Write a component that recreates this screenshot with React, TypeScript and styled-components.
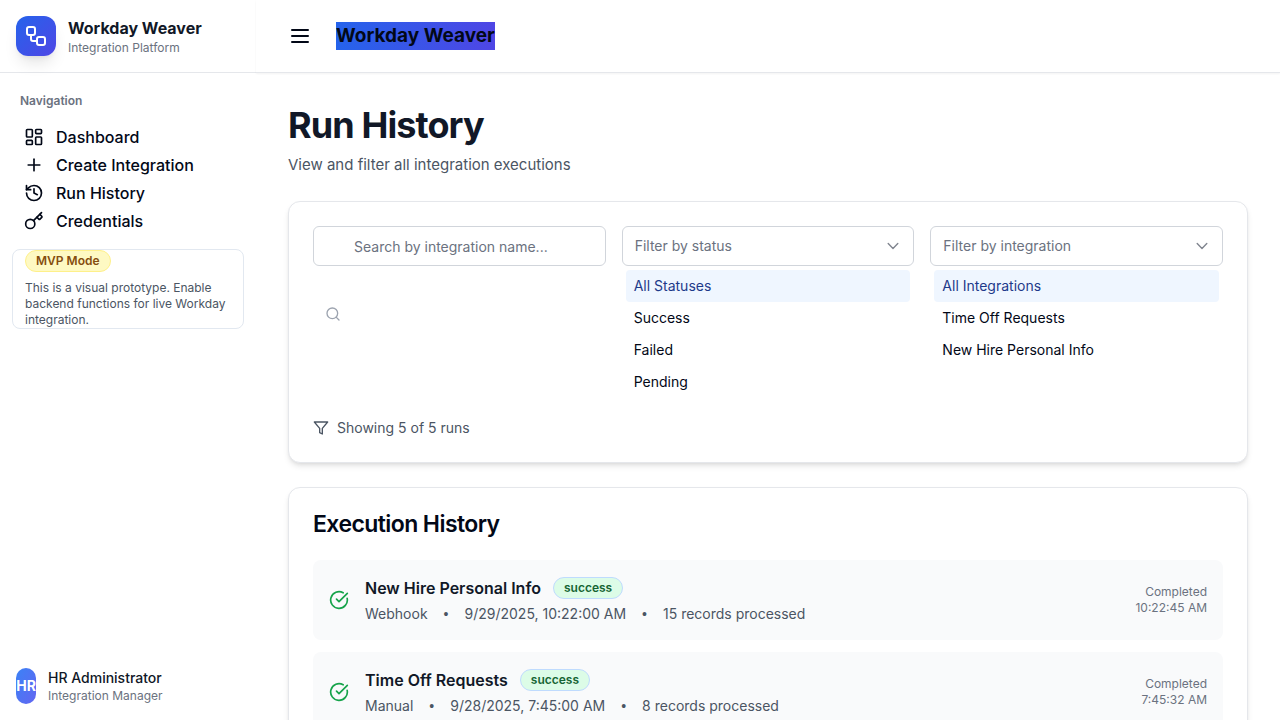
import React, { useState } from "react";
import styled, { createGlobalStyle } from "styled-components";
import {
  CircleCheckBig,
  History,
  Key,
  LayoutDashboard,
  Plus,
  Search,
  Workflow,
} from "lucide-react";

const GlobalStyle = createGlobalStyle`
  *, *::before, *::after { box-sizing: border-box; }
  body {
    margin: 0;
    background: #ffffff;
    color: #020817;
    font-family: Inter, "Liberation Sans", sans-serif;
    font-size: 16px;
    line-height: 24px;
  }
  h1, h2, h3, p, ul { margin: 0; padding: 0; }
  ul { list-style: none; }
  button, input, select { font: inherit; color: inherit; }
  svg { display: block; flex-shrink: 0; }
`;

const Shell = styled.div`
  display: flex;
  height: 100vh;
`;

const Sidebar = styled.aside`
  display: flex;
  flex-direction: column;
  flex: 0 0 256px;
  background: #ffffff;
`;

const Brand = styled.div`
  display: flex;
  align-items: center;
  gap: 12px;
  padding: 16px;
  border-bottom: 1px solid #e5e7eb;
`;

const BrandMark = styled.span`
  display: flex;
  align-items: center;
  justify-content: center;
  width: 40px;
  height: 40px;
  border-radius: 12px;
  color: #ffffff;
  background: linear-gradient(to bottom right, #2563eb, #4f46e5);
  box-shadow: 0 10px 15px -3px rgba(0, 0, 0, 0.1), 0 4px 6px -4px rgba(0, 0, 0, 0.1);
`;

const BrandName = styled.p`
  font-weight: 700;
  color: #111827;
`;

const Caption = styled.p`
  font-size: 12px;
  line-height: 16px;
  color: #6b7280;
`;

const SidebarBody = styled.div`
  flex: 1;
  padding: 12px;
`;

const NavLabel = styled.p`
  padding: 8px;
  margin-bottom: 8px;
  font-size: 12px;
  line-height: 16px;
  font-weight: 600;
  color: #6b7280;
`;

const NavList = styled.ul`
  display: flex;
  flex-direction: column;
  gap: 4px;
  padding: 0 12px;
`;

const NavLink = styled.a`
  display: flex;
  align-items: center;
  gap: 12px;
  font-weight: 500;
  color: #020817;
  text-decoration: none;
`;

const Notice = styled.section`
  margin-top: 16px;
  padding: 0 12px;
  border: 1px solid #e2e8f0;
  border-radius: 8px;
`;

const NoticeText = styled.p`
  margin-top: 8px;
  font-size: 12px;
  line-height: 16px;
  color: #4b5563;
`;

const tones = {
  warning: { text: "#854d0e", fill: "#fef9c3", edge: "#fef08a" },
  success: { text: "#166534", fill: "#dcfce7", edge: "#bfdbfe" },
};

const Badge = styled.span<{ $tone: keyof typeof tones }>`
  display: flex;
  width: fit-content;
  padding: 2px 10px;
  border: 1px solid ${(p) => tones[p.$tone].edge};
  border-radius: 11px;
  background: ${(p) => tones[p.$tone].fill};
  color: ${(p) => tones[p.$tone].text};
  font-size: 12px;
  line-height: 16px;
  font-weight: 600;
`;

const Account = styled.div`
  display: flex;
  align-items: center;
  gap: 12px;
  padding: 16px;
`;

const Avatar = styled.span`
  display: flex;
  align-items: center;
  justify-content: center;
  width: 20px;
  height: 36px;
  border-radius: 10px;
  background: linear-gradient(to bottom right, #3b82f6, #6366f1);
  color: #ffffff;
  font-size: 14px;
  line-height: 20px;
  font-weight: 700;
`;

const AccountName = styled.p`
  font-size: 14px;
  line-height: 20px;
  font-weight: 500;
  color: #111827;
`;

const Main = styled.main`
  display: flex;
  flex: 1;
  flex-direction: column;
  min-width: 0;
`;

const TopBar = styled.header`
  display: flex;
  align-items: center;
  gap: 24px;
  padding: 22px 32px;
  border-bottom: 1px solid #e5e7eb;
  box-shadow: 0 1px 2px rgba(0, 0, 0, 0.05);
`;

const MenuButton = styled.button`
  padding: 0;
  border: 0;
  background: none;
  cursor: pointer;
`;

const TopTitle = styled.p`
  font-size: 19px;
  line-height: 28px;
  font-weight: 700;
  background: linear-gradient(to right, #2563eb, #4f46e5);
`;

const Content = styled.div`
  display: flex;
  flex: 1;
  flex-direction: column;
  gap: 24px;
  min-height: 0;
  padding: 32px;
  overflow-y: auto;
  scrollbar-width: none;
`;

const PageTitle = styled.h1`
  margin-bottom: 8px;
  font-size: 36px;
  line-height: 40px;
  font-weight: 700;
  letter-spacing: -0.025em;
  color: #111827;
`;

const PageIntro = styled.p`
  font-size: 15px;
  color: #4b5563;
`;

const Card = styled.section`
  flex-shrink: 0;
  padding: 24px;
  border: 1px solid #e5e7eb;
  border-radius: 12px;
  background: #ffffff;
  box-shadow: 0 4px 6px -1px rgba(0, 0, 0, 0.1), 0 2px 4px -2px rgba(0, 0, 0, 0.1);
`;

const FilterGrid = styled.div`
  display: grid;
  grid-template-columns: repeat(3, minmax(0, 1fr));
  gap: 16px;
`;

const SearchField = styled.label`
  position: relative;
  color: #9ca3af;

  svg {
    position: absolute;
    left: 12px;
    top: 50%;
    transform: translateY(-50%);
  }
`;

const SearchInput = styled.input`
  display: block;
  width: 100%;
  height: 40px;
  padding: 8px 12px 8px 40px;
  border: 1px solid #d1d5db;
  border-radius: 6px;
  background: #ffffff;
  color: #020817;
  font-size: 14px;

  &::placeholder { color: #6b7280; opacity: 1; }
`;

const SelectBox = styled.div`
  position: relative;
  color: #80858f;

  svg {
    position: absolute;
    right: 13px;
    top: 12px;
    pointer-events: none;
  }
`;

const SelectInput = styled.select`
  display: block;
  width: 100%;
  height: 40px;
  padding: 0 12px;
  appearance: none;
  border: 1px solid #d1d5db;
  border-radius: 6px;
  background: #ffffff;
  color: #6b7280;
  font-size: 14px;
`;

const OptionList = styled.ul`
  padding: 4px;
`;

const OptionButton = styled.button<{ $active: boolean }>`
  display: block;
  width: 100%;
  padding: 6px 8px;
  border: 0;
  border-radius: 4px;
  background: ${(p) => (p.$active ? "#eff6ff" : "transparent")};
  color: ${(p) => (p.$active ? "#1e3a8a" : "#020817")};
  font-size: 14px;
  line-height: 20px;
  text-align: left;
  cursor: pointer;
`;

const Summary = styled.p`
  display: flex;
  align-items: center;
  gap: 8px;
  margin-top: 16px;
  font-size: 14px;
  line-height: 20px;
  color: #4b5563;
`;

const CardTitle = styled.h2`
  margin-bottom: 24px;
  font-size: 23px;
  line-height: 24px;
  font-weight: 600;
  letter-spacing: -0.025em;
`;

const RunList = styled.ul`
  display: flex;
  flex-direction: column;
  gap: 12px;
`;

const RunRow = styled.li`
  display: flex;
  align-items: center;
  gap: 16px;
  padding: 16px;
  border-radius: 8px;
  background: #f9fafb;
  color: #16a34a;
`;

const RunInfo = styled.div`
  flex: 1;
  min-width: 0;
`;

const RunHeading = styled.div`
  display: flex;
  align-items: center;
  gap: 12px;
  margin-bottom: 4px;
`;

const RunName = styled.h3`
  font-size: 16px;
  line-height: 24px;
  font-weight: 600;
  color: #111827;
`;

const RunMeta = styled.p`
  display: flex;
  gap: 16px;
  font-size: 14px;
  line-height: 20px;
  color: #4b5563;
`;

const Bullet = styled.span`
  font-family: "Liberation Sans", sans-serif;
`;

const RunFinish = styled.div`
  text-align: right;
`;

function MenuIcon() {
  return (
    <svg width="24" height="24" viewBox="0 0 24 24" fill="none" stroke="currentColor" strokeWidth="2" strokeLinecap="round" aria-hidden="true">
      <path d="M4 6h16M4 12h16M4 18h16" />
    </svg>
  );
}

function ChevronIcon() {
  return (
    <svg width="16" height="16" viewBox="0 0 16 16" fill="none" stroke="currentColor" strokeWidth="1.4" strokeLinecap="round" strokeLinejoin="round" aria-hidden="true">
      <path d="M3.2 5.6 8 10.4l4.8-4.8" />
    </svg>
  );
}

function FilterIcon() {
  return (
    <svg width="16" height="16" viewBox="0 0 24 24" fill="none" stroke="currentColor" strokeWidth="2" strokeLinecap="round" strokeLinejoin="round" aria-hidden="true">
      <polygon points="22 3 2 3 10 12.46 10 19 14 21 14 12.46 22 3" />
    </svg>
  );
}

interface FilterProps {
  label: string;
  options: string[];
  value: string;
  onChange: (value: string) => void;
}

function Filter({ label, options, value, onChange }: FilterProps) {
  return (
    <div>
      <SelectBox>
        <SelectInput
          aria-label={label}
          value={value}
          onChange={(e) => onChange(e.target.value)}
        >
          <option value="">{label}</option>
          {options.slice(1).map((o) => (
            <option key={o} value={o}>{o}</option>
          ))}
        </SelectInput>
        <ChevronIcon />
      </SelectBox>
      <OptionList>
        {options.map((o, i) => {
          const key = i === 0 ? "" : o;
          return (
            <li key={o}>
              <OptionButton
                type="button"
                $active={value === key}
                aria-pressed={value === key}
                onClick={() => onChange(key)}
              >
                {o}
              </OptionButton>
            </li>
          );
        })}
      </OptionList>
    </div>
  );
}

const navItems = [
  { label: "Dashboard", Icon: LayoutDashboard },
  { label: "Create Integration", Icon: Plus },
  { label: "Run History", Icon: History },
  { label: "Credentials", Icon: Key },
];

const runs = [
  { name: "New Hire Personal Info", trigger: "Webhook", started: "9/29/2025, 10:22:00 AM", records: 15, finished: "10:22:45 AM" },
  { name: "Time Off Requests", trigger: "Manual", started: "9/28/2025, 7:45:00 AM", records: 8, finished: "7:45:32 AM" },
];

export default function App() {
  const [query, setQuery] = useState("");
  const [status, setStatus] = useState("");
  const [integration, setIntegration] = useState("");

  const visible = runs.filter(
    (r) =>
      r.name.toLowerCase().includes(query.toLowerCase()) &&
      (!status || status === "Success") &&
      (!integration || integration === r.name)
  );

  return (
    <Shell>
      <GlobalStyle />
      <Sidebar>
        <Brand>
          <BrandMark><Workflow size={24} /></BrandMark>
          <div>
            <BrandName>Workday Weaver</BrandName>
            <Caption>Integration Platform</Caption>
          </div>
        </Brand>
        <SidebarBody>
          <NavLabel>Navigation</NavLabel>
          <nav>
            <NavList>
              {navItems.map(({ label, Icon }) => (
                <li key={label}>
                  <NavLink href="#"><Icon size={20} />{label}</NavLink>
                </li>
              ))}
            </NavList>
          </nav>
          <Notice>
            <Badge $tone="warning">MVP Mode</Badge>
            <NoticeText>
              This is a visual prototype. Enable backend functions for live Workday integration.
            </NoticeText>
          </Notice>
        </SidebarBody>
        <Account>
          <Avatar>HR</Avatar>
          <div>
            <AccountName>HR Administrator</AccountName>
            <Caption>Integration Manager</Caption>
          </div>
        </Account>
      </Sidebar>

      <Main>
        <TopBar>
          <MenuButton type="button" aria-label="Toggle sidebar"><MenuIcon /></MenuButton>
          <TopTitle>Workday Weaver</TopTitle>
        </TopBar>
        <Content>
          <div>
            <PageTitle>Run History</PageTitle>
            <PageIntro>View and filter all integration executions</PageIntro>
          </div>

          <Card>
            <FilterGrid>
              <SearchField>
                <Search size={16} />
                <SearchInput
                  type="text"
                  aria-label="Search by integration name"
                  placeholder="Search by integration name..."
                  value={query}
                  onChange={(e) => setQuery(e.target.value)}
                />
              </SearchField>
              <Filter
                label="Filter by status"
                options={["All Statuses", "Success", "Failed", "Pending"]}
                value={status}
                onChange={setStatus}
              />
              <Filter
                label="Filter by integration"
                options={["All Integrations", "Time Off Requests", "New Hire Personal Info"]}
                value={integration}
                onChange={setIntegration}
              />
            </FilterGrid>
            <Summary><FilterIcon />Showing 5 of 5 runs</Summary>
          </Card>

          <Card>
            <CardTitle>Execution History</CardTitle>
            <RunList>
              {visible.map((run) => (
                <RunRow key={run.name}>
                  <CircleCheckBig size={20} />
                  <RunInfo>
                    <RunHeading>
                      <RunName>{run.name}</RunName>
                      <Badge $tone="success">success</Badge>
                    </RunHeading>
                    <RunMeta>
                      <span>{run.trigger}</span>
                      <Bullet>•</Bullet>
                      <span>{run.started}</span>
                      <Bullet>•</Bullet>
                      <span>{run.records} records processed</span>
                    </RunMeta>
                  </RunInfo>
                  <RunFinish>
                    <Caption>Completed</Caption>
                    <Caption>{run.finished}</Caption>
                  </RunFinish>
                </RunRow>
              ))}
            </RunList>
          </Card>
        </Content>
      </Main>
    </Shell>
  );
}
